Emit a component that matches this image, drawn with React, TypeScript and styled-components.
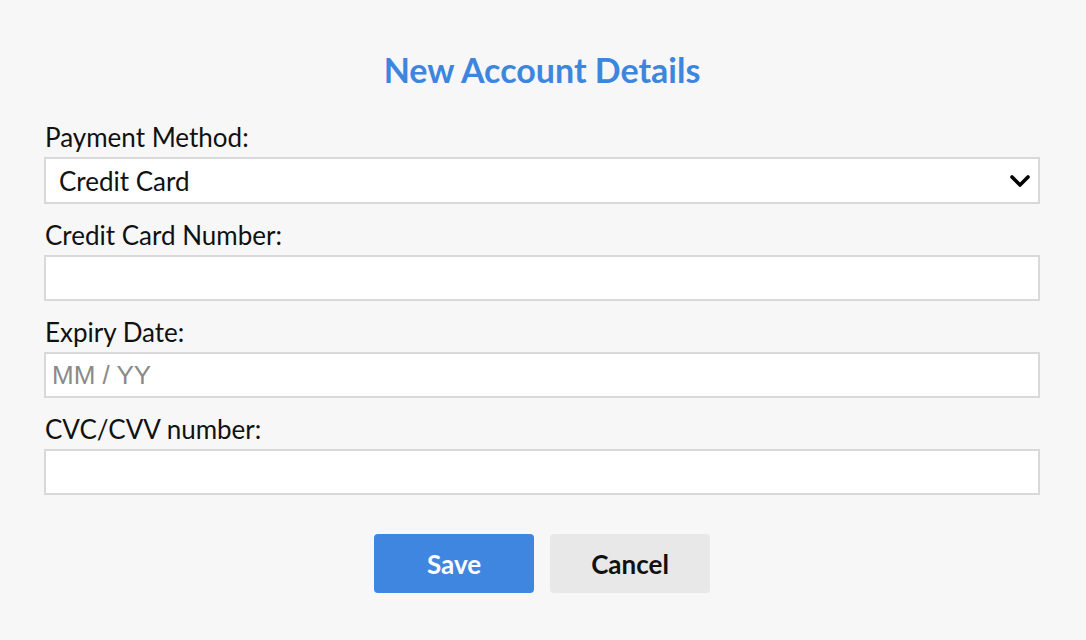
import React from "react";
import styled, { createGlobalStyle } from "styled-components";

const Global = createGlobalStyle`
  html, body { margin: 0; padding: 0; background: #f7f7f7; }
  body { font-family: Lato, "Open Sans", sans-serif; color: #111; }
  * { box-sizing: border-box; }
`;

const Page = styled.div`
  width: 1086px;
  height: 640px;
  padding: 50px 46px 0 44px;
  background: #f7f7f7;
`;

const Title = styled.h2`
  margin: 0 0 32px;
  text-align: center;
  font-family: Lato, sans-serif;
  font-weight: 700;
  font-size: 34px;
  line-height: 40px;
  color: #3d86e0;
`;

const Form = styled.form`
  display: flex;
  flex-direction: column;
  gap: 16px;
`;

const Field = styled.div`
  display: flex;
  flex-direction: column;
  gap: 5px;
`;

const Label = styled.label`
  font-family: Lato, sans-serif;
  font-size: 26px;
  line-height: 30px;
  color: #111;
  padding-left: 1px;
`;

const SelectWrap = styled.div`
  position: relative;
`;

const Select = styled.select`
  appearance: none;
  width: 100%;
  height: 47px;
  padding: 0 40px 0 13px;
  border: 2px solid #d9d9d9;
  border-radius: 0;
  background: #fff;
  font-family: Lato, sans-serif;
  font-size: 26px;
  color: #111;
  outline: none;
`;

const Chevron = styled.svg`
  position: absolute;
  right: 8px;
  top: 50%;
  transform: translateY(-50%);
  pointer-events: none;
`;

const Input = styled.input`
  width: 100%;
  height: 46px;
  padding: 0 6px;
  border: 2px solid #d9d9d9;
  border-radius: 0;
  background: #fff;
  font-family: "Liberation Sans", Arial, sans-serif;
  font-size: 26px;
  color: #111;
  outline: none;
  &::placeholder { color: #8a8a8a; }
`;

const Buttons = styled.div`
  display: flex;
  justify-content: center;
  gap: 16px;
  margin-top: 23px;
`;

const Button = styled.button<{ $primary?: boolean }>`
  width: 160px;
  height: 59px;
  border: none;
  border-radius: 4px;
  font-family: Lato, sans-serif;
  font-weight: 700;
  font-size: 26px;
  background: ${(p) => (p.$primary ? "#3f86e1" : "#e8e8e8")};
  color: ${(p) => (p.$primary ? "#fff" : "#111")};
  cursor: pointer;
`;

export default function App() {
  return (
    <>
      <Global />
      <Page>
        <Title>New Account Details</Title>
        <Form onSubmit={(e) => e.preventDefault()}>
          <Field>
            <Label>Payment Method:</Label>
            <SelectWrap>
              <Select defaultValue="cc">
                <option value="cc">Credit Card</option>
                <option value="pp">PayPal</option>
              </Select>
              <Chevron width="24" height="16" viewBox="0 0 24 16">
                <path d="M4 4 L12 12 L20 4" fill="none" stroke="#000" strokeWidth="3.6" strokeLinecap="round" strokeLinejoin="round" />
              </Chevron>
            </SelectWrap>
          </Field>
          <Field>
            <Label>Credit Card Number:</Label>
            <Input type="text" />
          </Field>
          <Field>
            <Label>Expiry Date:</Label>
            <Input type="text" placeholder="MM / YY" />
          </Field>
          <Field>
            <Label>CVC/CVV number:</Label>
            <Input type="text" />
          </Field>
          <Buttons>
            <Button $primary type="submit">Save</Button>
            <Button type="button">Cancel</Button>
          </Buttons>
        </Form>
      </Page>
    </>
  );
}
